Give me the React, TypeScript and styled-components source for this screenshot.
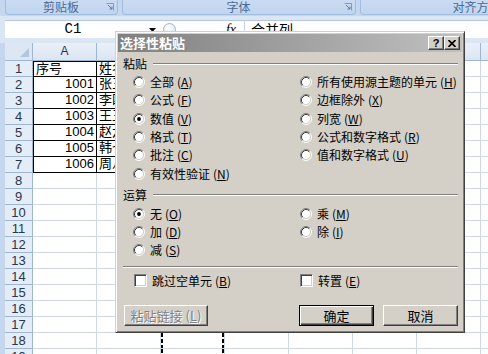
import React from 'react'
import styled, { createGlobalStyle, css } from 'styled-components'

const GlobalStyle = createGlobalStyle`
  html, body { margin: 0; padding: 0; }
  body { background: #fff; }
`

const CJK = `"Noto Sans CJK SC", sans-serif`
const LATIN = `"Liberation Sans", "Noto Sans CJK SC", sans-serif`

const Screen = styled.div`
  position: relative;
  width: 488px;
  height: 354px;
  overflow: hidden;
  background: #c4d7ee;
  font-family: ${CJK};
  font-size: 12px;
  color: #000;
`

/* ---------- ribbon ---------- */

const Ribbon = styled.div`
  display: flex;
  gap: 4px;
  height: 16px;
  padding-left: 5px;
  background: #c4d7ee;
`

const RibbonGroup = styled.div<{ $width: number }>`
  flex: 0 0 ${p => p.$width}px;
  display: flex;
  align-items: center;
  height: 15px;
  box-sizing: border-box;
  padding-right: 3px;
  border: 1px solid #a3bde0;
  border-top: none;
  border-radius: 0 0 4px 4px;
  background: linear-gradient(#cadcf2, #c0d5ef);
`

const GroupLabel = styled.span`
  flex: 1;
  text-align: center;
  padding-left: 10px;
  color: #4a6a96;
  line-height: 14px;
`

const Launcher = styled.span`
  width: 8px;
  height: 8px;
  display: flex;
`

/* ---------- formula bar ---------- */

const FormulaArea = styled.div`
  padding: 4px 0 5px 5px;
  background: #dbe6f4;
`

const FormulaBar = styled.div`
  display: flex;
  align-items: center;
  height: 18px;
  background: #fff;
  border-top: 1px solid #b4c8e3;
  box-sizing: border-box;
`

const NameBox = styled.div`
  width: 136px;
  text-align: center;
  font-family: "Liberation Mono", monospace;
  font-size: 14px;
  line-height: 17px;
`

const NameArrow = styled.span`
  width: 22px;
  display: flex;
  justify-content: center;
`

const FxBox = styled.div`
  display: flex;
  align-items: center;
  width: 81px;
  height: 17px;
  border-right: 1px solid #c6d4e6;
`

const FxHandle = styled.span`
  width: 11px;
  height: 11px;
  border-radius: 50%;
  border: 1px solid #a4b3c6;
  background: radial-gradient(circle at 40% 35%, #fff, #d9e1ea);
`

const FxGlyph = styled.span`
  margin-left: auto;
  margin-right: 8px;
  font-family: "Liberation Serif", serif;
  font-style: italic;
  font-size: 14px;
  line-height: 17px;
`

const FormulaText = styled.div`
  padding-left: 6px;
  font-size: 14px;
  line-height: 17px;
`

/* ---------- sheet ---------- */

const Sheet = styled.div`
  margin-left: 5px;
  display: grid;
  grid-template-columns: 28px repeat(8, 64px);
  grid-template-rows: 18px;
  grid-auto-rows: 16px;
  background: #fff;
`

const Corner = styled.div`
  display: flex;
  align-items: flex-end;
  justify-content: flex-end;
  padding: 0 3px 3px 0;
  background: #dde7f4;
  border-right: 1px solid #9eb6ce;
  border-bottom: 1px solid #9eb6ce;
`

const ColHeader = styled.div`
  background: linear-gradient(#eaf0f8, #dbe5f3);
  border-right: 1px solid #9eb6ce;
  border-bottom: 1px solid #9eb6ce;
  text-align: center;
  font-family: ${LATIN};
  line-height: 17px;
  color: #27374f;
`

const RowHeader = styled.div`
  background: #e4ecf7;
  border-right: 1px solid #9eb6ce;
  border-bottom: 1px solid #9eb6ce;
  text-align: center;
  font-family: ${LATIN};
  font-size: 13px;
  line-height: 15px;
  color: #27374f;
`

const marquee = css`
  background-image:
    repeating-linear-gradient(to bottom, #000 0 4px, transparent 4px 6px),
    repeating-linear-gradient(to bottom, #000 0 4px, transparent 4px 6px);
  background-size: 2px 100%, 2px 100%;
  background-position: 0 0, 100% 0;
  background-repeat: no-repeat;
`

const Cell = styled.div<{ $table?: boolean; $first?: boolean; $top?: boolean; $marquee?: boolean; $right?: boolean }>`
  box-sizing: border-box;
  border-right: 1px solid ${p => (p.$table ? '#000' : '#d0d7e5')};
  border-bottom: 1px solid ${p => (p.$table ? '#000' : '#d0d7e5')};
  ${p => p.$first && 'border-left: 1px solid #000;'}
  ${p => p.$top && 'border-top: 1px solid #000;'}
  padding: 0 2px;
  overflow: hidden;
  white-space: nowrap;
  font-family: ${LATIN};
  font-size: 13px;
  line-height: 14px;
  text-align: ${p => (p.$right ? 'right' : 'left')};
  ${p => p.$marquee && marquee}
`

/* ---------- dialog ---------- */

const Dialog = styled.div`
  position: absolute;
  left: 115px;
  top: 31px;
  width: 350px;
  height: 302px;
  box-sizing: border-box;
  padding: 2px;
  background: #d4d0c8;
  border: 1px solid;
  border-color: #d4d0c8 #404040 #404040 #d4d0c8;
  box-shadow: inset 1px 1px #fff, inset -1px -1px #808080;
  display: flex;
  flex-direction: column;
  font-family: ${CJK};
  font-size: 12px;
`

const TitleBar = styled.div`
  height: 18px;
  display: flex;
  align-items: center;
  padding: 0 2px;
  background: linear-gradient(to right, #808080, #c0c0c0);
`

const Title = styled.span`
  flex: 1;
  color: #fff;
  font-weight: bold;
  font-size: 13px;
  line-height: 18px;
`

const CaptionButton = styled.span`
  width: 16px;
  height: 14px;
  box-sizing: border-box;
  display: flex;
  align-items: center;
  justify-content: center;
  background: #d4d0c8;
  border: 1px solid;
  border-color: #fff #404040 #404040 #fff;
  box-shadow: inset -1px -1px #808080;
  font-family: "Liberation Sans", sans-serif;
  font-weight: bold;
  font-size: 11px;
  line-height: 12px;
`

const Body = styled.div`
  flex: 1;
  display: flex;
  flex-direction: column;
  padding: 0 4px 0 5px;
`

const Legend = styled.div<{ $mt: number }>`
  display: flex;
  align-items: center;
  height: 14px;
  margin-top: ${p => p.$mt}px;
  line-height: 14px;
`

const EtchedLine = styled.div`
  flex: 1;
  height: 0;
  border-top: 1px solid #808080;
  border-bottom: 1px solid #fff;
`

const LegendLine = styled(EtchedLine)`
  margin-left: 6px;
`

const Separator = styled(EtchedLine)`
  flex: none;
  margin-top: 7px;
`

const OptionGrid = styled.div<{ $rows: number; $rowH: number; $mt: number }>`
  display: grid;
  grid-template-columns: 167px 1fr;
  grid-template-rows: repeat(${p => p.$rows}, ${p => p.$rowH}px);
  grid-auto-flow: column;
  padding-left: 10px;
  margin-top: ${p => p.$mt}px;
`

const Option = styled.label`
  display: flex;
  align-items: center;
  gap: 5px;
  white-space: nowrap;
  line-height: 14px;
`

const Key = styled.span`
  margin-left: 3px;
  u { text-decoration-thickness: 1px; text-underline-offset: 1px; }
`

const CheckRow = styled.div`
  display: grid;
  grid-template-columns: 166px 1fr;
  height: 14px;
  padding-left: 11px;
  margin-top: 6px;
`

const CheckBox = styled.span`
  width: 13px;
  height: 13px;
  box-sizing: border-box;
  background: #fff;
  border: 1px solid;
  border-color: #808080 #fff #fff #808080;
  box-shadow: inset 1px 1px #404040, inset -1px -1px #d4d0c8;
`

const ButtonRow = styled.div`
  display: flex;
  gap: 9px;
  margin-top: 17px;
  padding-left: 1px;
`

const Button = styled.button<{ $width: number; $default?: boolean }>`
  width: ${p => p.$width}px;
  height: 21px;
  box-sizing: border-box;
  padding: 0;
  background: #d4d0c8;
  font-family: ${CJK};
  font-size: 13px;
  line-height: 17px;
  color: #000;
  border: 1px solid;
  border-color: #fff #404040 #404040 #fff;
  box-shadow: inset -1px -1px #808080, inset 1px 1px #d4d0c8;
  &:first-child { margin-right: auto; }
  &:disabled {
    color: #808080;
    text-shadow: 1px 1px #fff;
  }
  ${p =>
    p.$default &&
    css`
      border: 1px solid #000;
      box-shadow: inset 1px 1px #fff, inset -1px -1px #404040, inset -2px -2px #808080;
    `}
`

/* ---------- drawings ---------- */

const Radio = ({ checked }: { checked?: boolean }) => (
  <svg width="12" height="12" viewBox="0 0 12 12" style={{ flex: 'none' }}>
    <circle cx="6" cy="6" r="4.5" fill="#fff" />
    <path d="M2.11 9.89A5.5 5.5 0 0 1 9.89 2.11" fill="none" stroke="#808080" />
    <path d="M9.89 2.11A5.5 5.5 0 0 1 2.11 9.89" fill="none" stroke="#fff" />
    <path d="M2.82 9.18A4.5 4.5 0 0 1 9.18 2.82" fill="none" stroke="#404040" />
    <path d="M9.18 2.82A4.5 4.5 0 0 1 2.82 9.18" fill="none" stroke="#d4d0c8" />
    {checked && <circle cx="6" cy="6" r="1.9" fill="#000" />}
  </svg>
)

const LauncherIcon = () => (
  <svg width="8" height="8" viewBox="0 0 8 8">
    <path d="M0.5 0.5H7.5V7.5" fill="none" stroke="#7f9bc4" />
    <path d="M2 2L6 6M3.5 6H6V3.5" fill="none" stroke="#5b7bab" />
  </svg>
)

const CloseGlyph = () => (
  <svg width="8" height="7" viewBox="0 0 8 7">
    <path d="M0.5 0L7.5 7M7.5 0L0.5 7" stroke="#000" strokeWidth="1.6" />
  </svg>
)

/* ---------- data ---------- */

const COLUMNS = ['A', 'B', 'C', 'D', 'E', 'F', 'G', 'H']

const DATA: Record<string, string> = {
  A1: '序号', B1: '姓名',
  A2: '1001', B2: '张三',
  A3: '1002', B3: '李四',
  A4: '1003', B4: '王五',
  A5: '1004', B5: '赵六',
  A6: '1005', B6: '韩七',
  A7: '1006', B7: '周八',
}

const PASTE_OPTIONS = [
  ['全部', 'A'], ['公式', 'F'], ['数值', 'V'], ['格式', 'T'], ['批注', 'C'], ['有效性验证', 'N'],
  ['所有使用源主题的单元', 'H'], ['边框除外', 'X'], ['列宽', 'W'], ['公式和数字格式', 'R'], ['值和数字格式', 'U'],
]

const OPERATIONS = [['无', 'O'], ['加', 'D'], ['减', 'S'], ['乘', 'M'], ['除', 'I']]

const Label = ({ text, k }: { text: string; k: string }) => (
  <span>
    {text}
    <Key>
      (<u>{k}</u>)
    </Key>
  </span>
)

export default function App() {
  const rows = Array.from({ length: 19 }, (_, i) => i + 1)

  return (
    <Screen>
      <GlobalStyle />

      <Ribbon>
        <RibbonGroup $width={113}>
          <GroupLabel>剪贴板</GroupLabel>
          <Launcher><LauncherIcon /></Launcher>
        </RibbonGroup>
        <RibbonGroup $width={234}>
          <GroupLabel>字体</GroupLabel>
          <Launcher><LauncherIcon /></Launcher>
        </RibbonGroup>
        <RibbonGroup $width={226}>
          <GroupLabel>对齐方式</GroupLabel>
        </RibbonGroup>
      </Ribbon>

      <FormulaArea>
        <FormulaBar>
          <NameBox>C1</NameBox>
          <NameArrow>
            <svg width="7" height="4" viewBox="0 0 7 4"><path d="M0 0H7L3.5 4Z" fill="#000" /></svg>
          </NameArrow>
          <FxBox>
            <FxHandle />
            <FxGlyph>fx</FxGlyph>
          </FxBox>
          <FormulaText>合并列</FormulaText>
        </FormulaBar>
      </FormulaArea>

      <Sheet>
        <Corner>
          <svg width="9" height="9" viewBox="0 0 9 9"><path d="M9 0V9H0Z" fill="#b3c6df" /></svg>
        </Corner>
        {COLUMNS.map(c => (
          <ColHeader key={c}>{c}</ColHeader>
        ))}
        {rows.map(r => (
          <React.Fragment key={r}>
            <RowHeader>{r}</RowHeader>
            {COLUMNS.map(c => {
              const inTable = r <= 7 && (c === 'A' || c === 'B')
              const value = DATA[c + r]
              return (
                <Cell
                  key={c}
                  $table={inTable}
                  $first={inTable && c === 'A'}
                  $top={inTable && r === 1}
                  $marquee={c === 'C'}
                  $right={!!value && /^\d+$/.test(value)}
                >
                  {value}
                </Cell>
              )
            })}
          </React.Fragment>
        ))}
      </Sheet>

      <Dialog>
        <TitleBar>
          <Title>选择性粘贴</Title>
          <CaptionButton>?</CaptionButton>
          <CaptionButton><CloseGlyph /></CaptionButton>
        </TitleBar>

        <Body>
          <Legend $mt={5}>
            <span>粘贴</span>
            <LegendLine />
          </Legend>
          <OptionGrid $rows={6} $rowH={18.33} $mt={1.8}>
            {PASTE_OPTIONS.map(([t, k]) => (
              <Option key={t}>
                <Radio checked={t === '数值'} />
                <Label text={t} k={k} />
              </Option>
            ))}
          </OptionGrid>

          <Legend $mt={5.2}>
            <span>运算</span>
            <LegendLine />
          </Legend>
          <OptionGrid $rows={3} $rowH={18} $mt={3}>
            {OPERATIONS.map(([t, k]) => (
              <Option key={t}>
                <Radio checked={t === '无'} />
                <Label text={t} k={k} />
              </Option>
            ))}
          </OptionGrid>

          <Separator />

          <CheckRow>
            <Option>
              <CheckBox />
              <Label text="跳过空单元" k="B" />
            </Option>
            <Option>
              <CheckBox />
              <Label text="转置" k="E" />
            </Option>
          </CheckRow>

          <ButtonRow>
            <Button $width={84} disabled>
              <Label text="粘贴链接" k="L" />
            </Button>
            <Button $width={75} $default>确定</Button>
            <Button $width={75}>取消</Button>
          </ButtonRow>
        </Body>
      </Dialog>
    </Screen>
  )
}
